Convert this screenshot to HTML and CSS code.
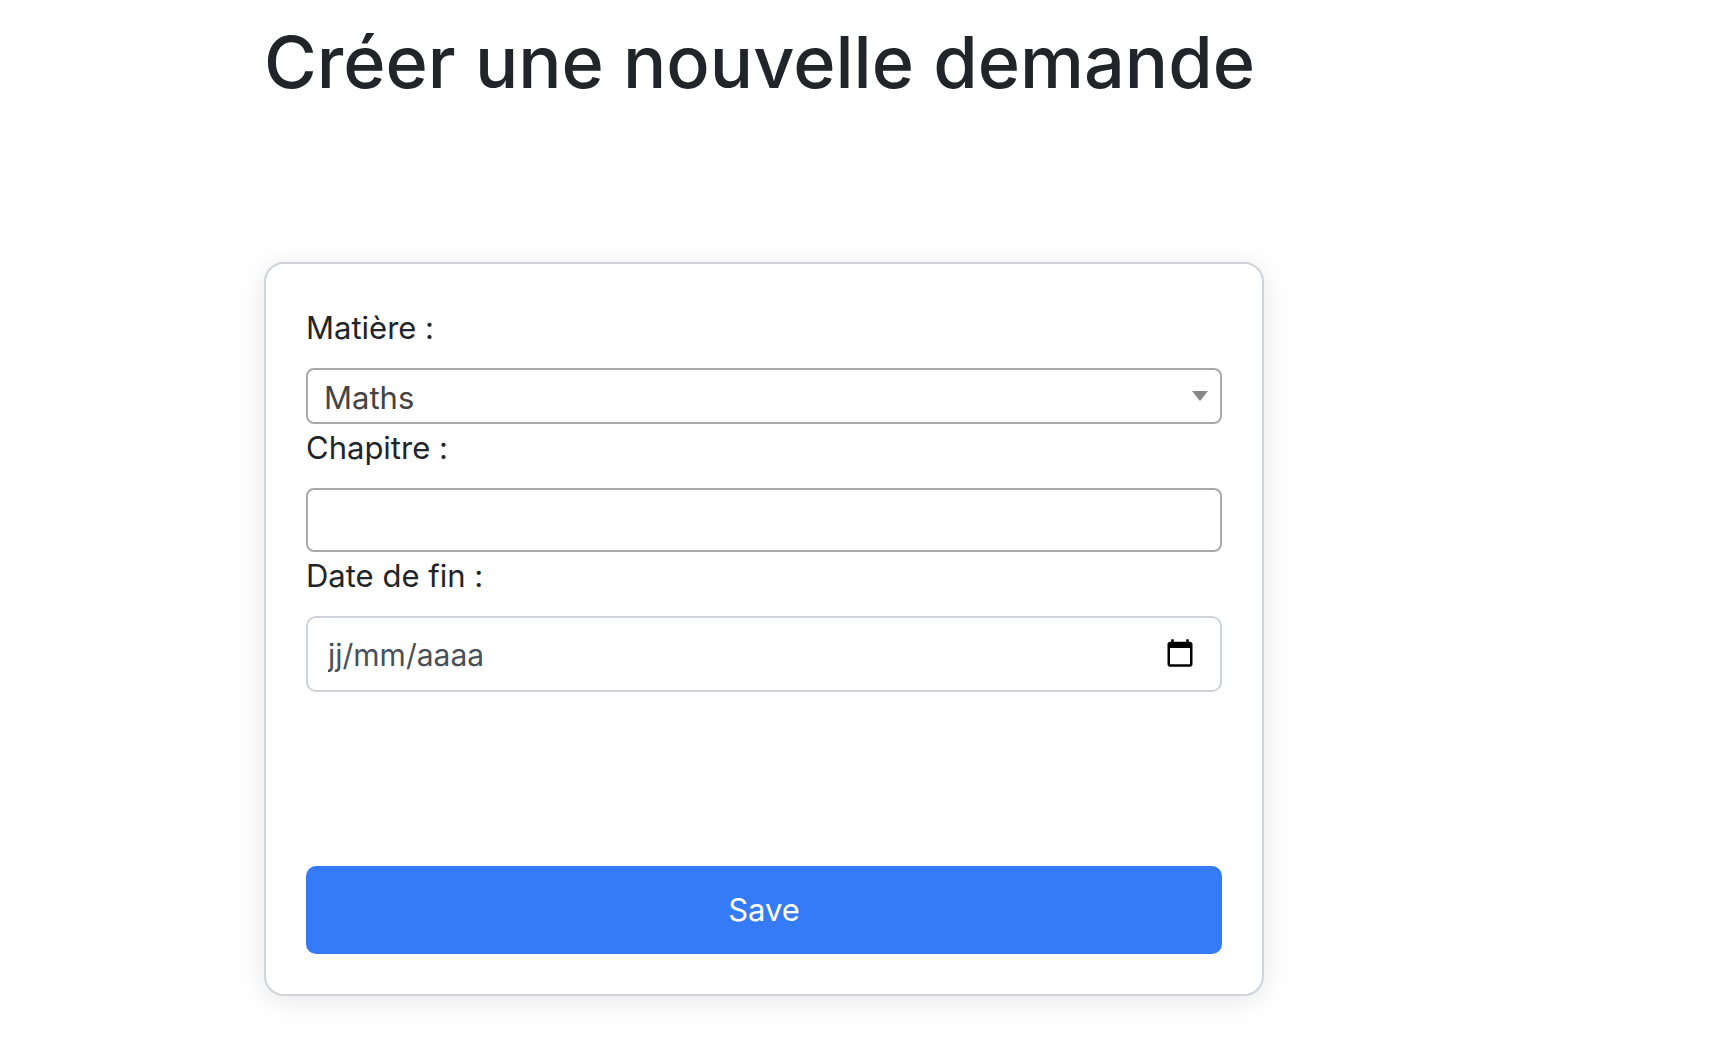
FILE: index.html
```html
<!DOCTYPE html>
<html lang="fr">
<head>
  <meta charset="utf-8">
  <meta name="viewport" content="width=device-width, initial-scale=1">
  <title>Créer une nouvelle demande</title>
  <link rel="stylesheet" href="styles.css">
</head>
<body>
  <main class="page">
    <h1 class="title">Créer une nouvelle demande</h1>
    <form class="card">
      <label class="label" for="subject">Matière :</label>
      <div class="select-wrap">
        <select class="field select" id="subject">
          <option>Maths</option>
        </select>
        <svg class="arrow" viewBox="0 0 16 10" aria-hidden="true"><path d="M0 0h16L8 10z"/></svg>
      </div>
      <label class="label" for="chapter">Chapitre :</label>
      <input class="field chapter" id="chapter" type="text">
      <label class="label" for="end-date">Date de fin :</label>
      <div class="date">
        <input class="date-input" id="end-date" type="text" placeholder="jj/mm/aaaa">
        <button class="date-button" type="button" aria-label="Ouvrir le calendrier">
          <svg class="calendar" viewBox="0 0 24 24" aria-hidden="true"><path d="M20 3h-1V1h-2v2H7V1H5v2H4c-1.100 0-2 .9-2 2v16c0 1.100.9 2 2 2h16c1.100 0 2-.9 2-2V5c0-1.100-.9-2-2-2zm0 18H4V8h16z"/></svg>
        </button>
      </div>
      <button class="save" type="submit">Save</button>
    </form>
  </main>
</body>
</html>
```
FILE: styles.css
```css
*,
*::before,
*::after {
  box-sizing: border-box;
}

body {
  margin: 0;
  background: #fff;
  color: #212529;
  font: 400 31px/48px Inter, "Liberation Sans", sans-serif;
}

input,
select,
button {
  font: inherit;
}

.page {
  max-width: 1000px;
  margin: 0 24px 0 264px;
  padding: 14px 0 54px;
}

.title {
  margin: 0 0 152px;
  font-size: 72px;
  font-weight: 500;
  line-height: 96px;
}

.card {
  display: flex;
  flex-direction: column;
  padding: 40px;
  border: 2px solid #ced4da;
  border-radius: 20px;
  background: #fff;
  box-shadow: 0 4px 28px rgba(0, 0, 0, 0.1);
}

.label {
  margin-bottom: 16px;
}

.select-wrap {
  display: grid;
  align-items: center;
}

.select-wrap > * {
  grid-area: 1 / 1;
}

.field {
  width: 100%;
  border: 2px solid #aaa;
  border-radius: 8px;
  background: #fff;
  color: #444;
}

.select {
  height: 56px;
  padding: 4px 40px 0 16px;
  appearance: none;
}

.arrow {
  justify-self: end;
  width: 16px;
  height: 10px;
  margin-right: 14px;
  fill: #888;
  pointer-events: none;
}

.chapter {
  height: 64px;
  padding: 0 16px;
}

.date {
  display: flex;
  align-items: center;
  height: 76px;
  padding: 0 25px 2px 20px;
  border: 2px solid #ced4da;
  border-radius: 10px;
}

.date-input {
  flex: 1;
  min-width: 0;
  padding: 4px 0 0;
  border: 0;
  background: none;
  color: #495057;
  font-size: 30px;
}

.date-input::placeholder {
  color: #495057;
  opacity: 1;
}

.date-button {
  display: flex;
  padding: 0;
  border: 0;
  background: none;
}

.calendar {
  width: 30px;
  height: 30px;
}

.save {
  margin-top: 174px;
  padding: 20px;
  border: 0;
  border-radius: 10px;
  background: #357af6;
  color: #fff;
}
```
